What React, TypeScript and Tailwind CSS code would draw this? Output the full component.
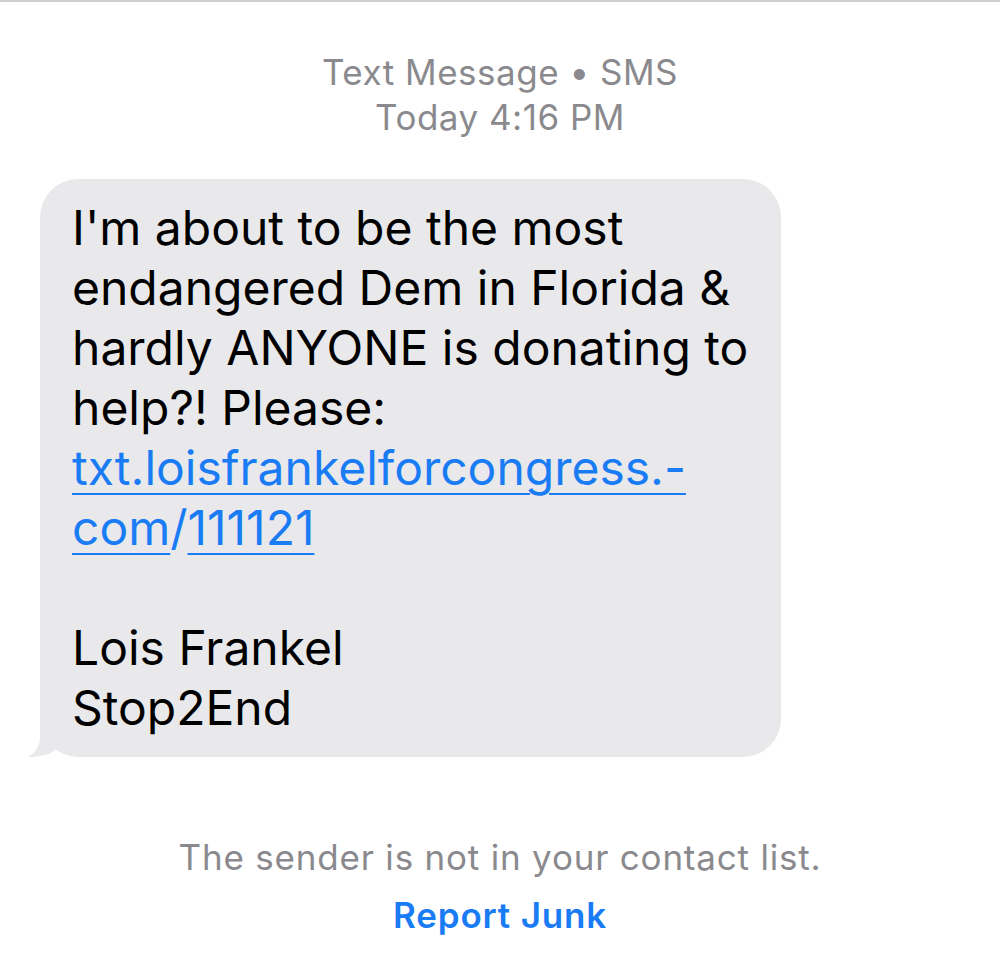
import React from "react";

export default function App() {
  const font = { fontFamily: "Inter, 'Noto Sans', sans-serif" };
  return (
    <div className="w-[1000px] h-[979px] bg-white overflow-hidden" style={font}>
      <div className="h-[2px] bg-[#cfcfd1]" />
      <div className="pt-[48px] text-center text-[35px] leading-[45px] tracking-[0.5px] text-[#8a8a8e]">
        <div>Text Message • SMS</div>
        <div>Today 4:16 PM</div>
      </div>
      <div className="mt-[39px] ml-[40px] relative w-[741px]">
        <div className="rounded-[38px] bg-[#e9e9eb] px-[32px] py-[19px] text-[48px] leading-[60px] text-black whitespace-nowrap">
          <div>I'm about to be the most</div>
          <div>endangered Dem in Florida &amp;</div>
          <div>hardly ANYONE is donating to</div>
          <div>help?! Please:</div>
          <div className="text-[#1a7cf4] underline decoration-2 underline-offset-[8px]">
            txt.loisfrankelforcongress.-
          </div>
          <div className="text-[#1a7cf4]">
            <span className="underline decoration-2 underline-offset-[8px]">com</span>/
            <span className="underline decoration-2 underline-offset-[8px]">111121</span>
          </div>
          <div>&nbsp;</div>
          <div>Lois Frankel</div>
          <div>Stop2End</div>
        </div>
        <svg
          className="absolute left-[-14px] bottom-0"
          width="60"
          height="45"
          viewBox="0 0 60 45"
        >
          <path d="M14 0 L14 25 C14 36 8 42 1 45 C12 45 22 44 29 38 L29 0 Z" fill="#e9e9eb" />
        </svg>
      </div>
      <div className="mt-[71px] text-center text-[35px] leading-[58px] tracking-[0.8px]">
        <div className="text-[#8a8a8e]">The sender is not in your contact list.</div>
        <div className="text-[#1a7cf4] font-semibold">Report Junk</div>
      </div>
    </div>
  );
}
